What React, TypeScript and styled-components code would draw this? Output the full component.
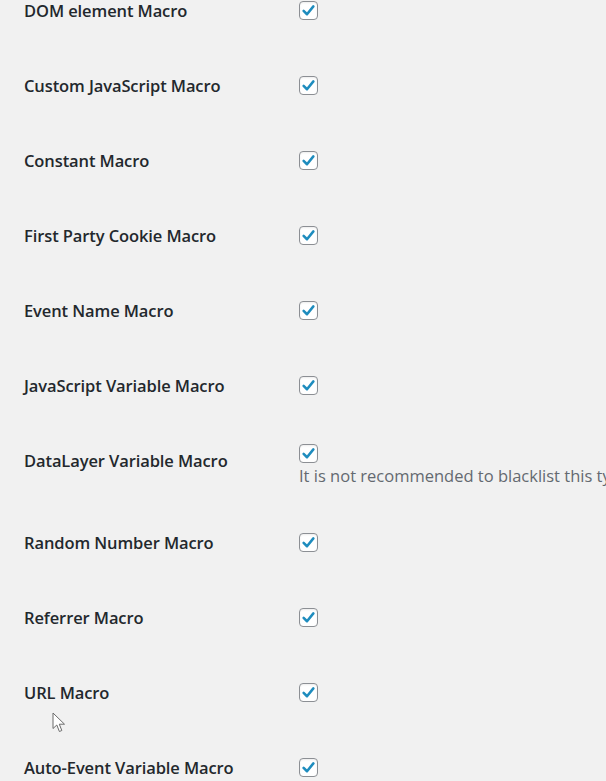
import React from 'react';
import styled, { createGlobalStyle } from 'styled-components';

const GlobalStyle = createGlobalStyle`
    html, body {
        margin: 0;
        padding: 0;
        background: #f1f1f1;
        overflow: hidden;
    }
    body {
        font-family: 'Open Sans', 'Noto Sans', sans-serif;
        color: #23282d;
    }
`;

const Page = styled.div`
    position: relative;
    width: 606px;
    height: 781px;
    overflow: hidden;
`;

const Table = styled.div`
    display: flex;
    flex-direction: column;
    margin-top: -27px;
    padding-left: 24px;
`;

const Row = styled.div<{ $tall?: boolean }>`
    display: grid;
    grid-template-columns: 275px 1fr;
    padding-bottom: ${(p) => (p.$tall ? '18px' : '0')};
`;

const Label = styled.div`
    padding-top: 27px;
    font-size: 16.5px;
    font-weight: 600;
    line-height: 21px;
    letter-spacing: -0.1px;
    white-space: nowrap;
`;

const Control = styled.div<{ $tall?: boolean }>`
    padding-top: ${(p) => (p.$tall ? '21px' : '28px')};
    padding-bottom: ${(p) => (p.$tall ? '0' : '28px')};
    display: flex;
    flex-direction: column;
    align-items: flex-start;
    min-width: 0;
`;

const Box = styled.span`
    width: 19px;
    height: 19px;
    box-sizing: border-box;
    border: 1px solid #8c8f94;
    border-radius: 4px;
    background: #fff;
    display: flex;
    align-items: center;
    justify-content: center;
    box-shadow: inset 0 1px 2px rgba(0, 0, 0, 0.08);
`;

const Description = styled.p`
    margin: 2px 0 0;
    font-size: 16.5px;
    line-height: 22px;
    color: #646970;
    white-space: nowrap;
`;

const Cursor = styled.svg`
    position: absolute;
    left: 52px;
    top: 712px;
`;

const Checkbox = () => (
    <Box>
        <svg width='15' height='15' viewBox='0 0 20 20'>
            <path d='M3.5 10.5 L8 15 L16.5 4.5' fill='none' stroke='#1e8cbe' strokeWidth='3.4' strokeLinecap='round' strokeLinejoin='round' />
        </svg>
    </Box>
);

const macros = [
    'DOM element Macro',
    'Custom JavaScript Macro',
    'Constant Macro',
    'First Party Cookie Macro',
    'Event Name Macro',
    'JavaScript Variable Macro',
    'DataLayer Variable Macro',
    'Random Number Macro',
    'Referrer Macro',
    'URL Macro',
    'Auto-Event Variable Macro',
];

const App = () => {
    return (
        <Page>
            <GlobalStyle />
            <Table>
                {macros.map((name, index) => {
                    const tall = name === 'DataLayer Variable Macro';
                    return (
                        <Row key={`macro-${index}`} $tall={tall}>
                            <Label>{name}</Label>
                            <Control $tall={tall}>
                                <Checkbox />
                                {tall && <Description>It is not recommended to blacklist this type of variable</Description>}
                            </Control>
                        </Row>
                    );
                })}
            </Table>
            <Cursor width='14' height='22' viewBox='0 0 14 22'>
                <path d='M1 1 L1 16.5 L4.8 13 L7.4 19.5 L9.8 18.5 L7.3 12.2 L12.5 12.2 Z' fill='#fff' stroke='#6b6b6b' strokeWidth='1' strokeLinejoin='round' />
            </Cursor>
        </Page>
    );
};

export default App;
